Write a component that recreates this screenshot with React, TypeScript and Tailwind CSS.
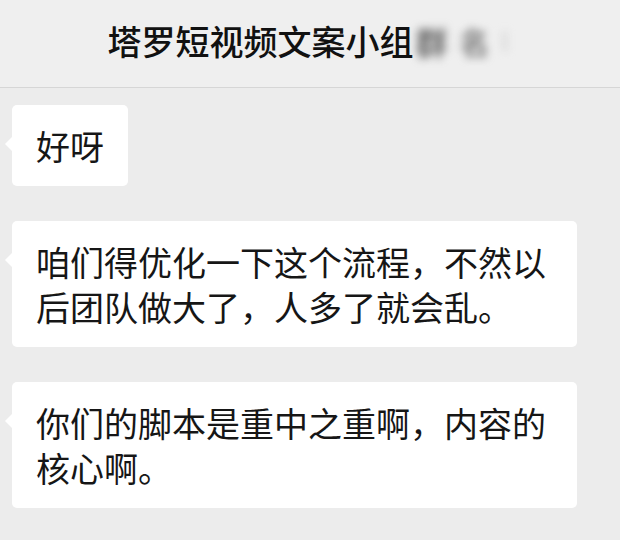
import React from 'react';

type Msg = { id: number; text: string };

const MESSAGES: Msg[] = [
  { id: 1, text: '好呀' },
  { id: 2, text: '咱们得优化一下这个流程，不然以后团队做大了，人多了就会乱。' },
  { id: 3, text: '你们的脚本是重中之重啊，内容的核心啊。' },
];

const font = "font-['Noto_Sans_CJK_SC','Noto_Sans',sans-serif]";

// group name suffix is blurred out in the screenshot
const Header: React.FC = () => (
  <header className="h-[88px] shrink-0 flex items-center justify-center border-b border-[#d6d6d6] bg-[#efefef] pb-[6px]">
    <span className="text-[34px] leading-none font-medium text-[#111]">塔罗短视频文案小组</span>
    <span className="flex items-center gap-[12px] ml-[2px] blur-[4px] select-none" aria-hidden>
      <span className="text-[32px] leading-none font-bold text-[#6a6a6a]">群</span>
      <span className="text-[30px] leading-none font-bold text-[#7a7a7a]">名</span>
      <span className="text-[24px] leading-none text-[#c4c4c4] pr-[4px]">l</span>
    </span>
  </header>
);

const Bubble: React.FC<{ msg: Msg }> = ({ msg }) => (
  <div className="relative ml-[12px] self-start max-w-[565px] bg-white rounded-[5px] px-[24px] py-[18px]">
    <span className="absolute left-[-7px] top-[32px] w-0 h-0 border-y-[7px] border-y-transparent border-r-[7px] border-r-white" />
    <p className="text-[34px] leading-[45px] text-[#161616]">{msg.text}</p>
  </div>
);

const App: React.FC = () => {
  return (
    <div className={`w-[620px] h-[540px] flex flex-col bg-[#ececec] overflow-hidden ${font}`}>
      <Header />
      <main className="flex-1 flex flex-col gap-[35px] pt-[17px]">
        {MESSAGES.map(m => (
          <Bubble key={m.id} msg={m} />
        ))}
      </main>
    </div>
  );
};

export default App;
